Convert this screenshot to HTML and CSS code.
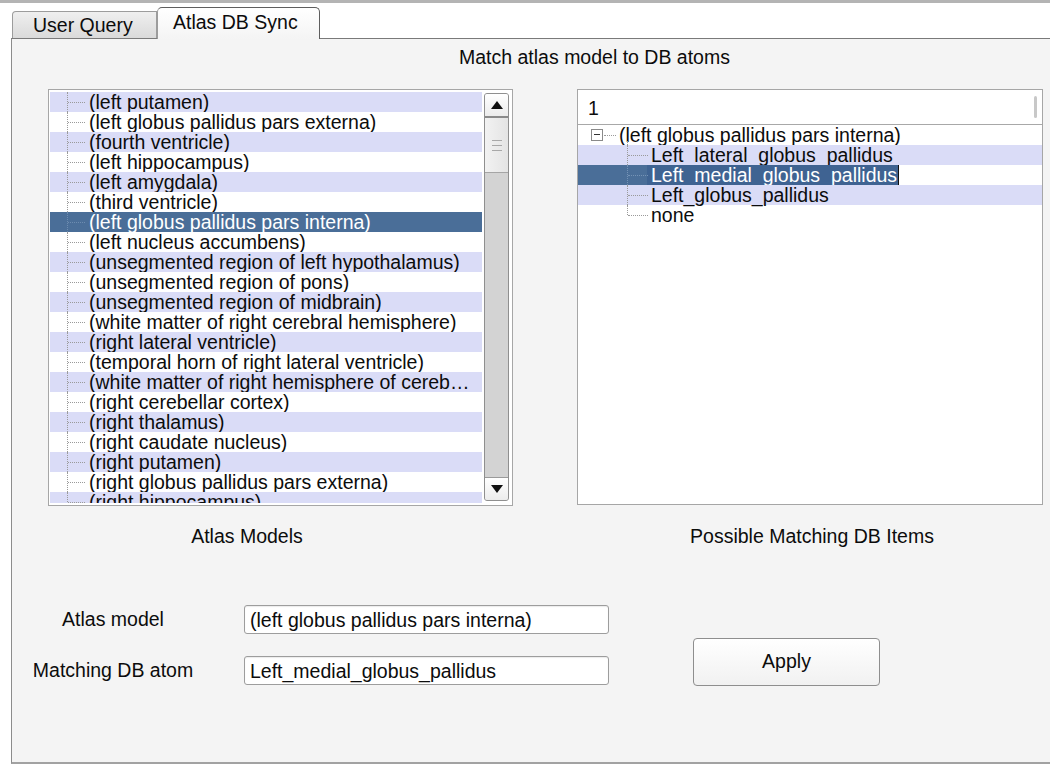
FILE: index.html
```html
<!DOCTYPE html>
<html>
<head>
<meta charset="utf-8">
<title>Atlas DB Sync</title>
<link rel="stylesheet" href="styles.css">
</head>
<body>
<div class="topbar"></div>
<div class="tabs">
  <div class="tab">User Query</div>
  <div class="tab active">Atlas DB Sync</div>
</div>
<div class="panel">
  <div class="title">Match atlas model to DB atoms</div>
  <div class="lists">
    <div class="listbox">
      <div class="rows">
        <div class="row">(left putamen)</div>
        <div class="row">(left globus pallidus pars externa)</div>
        <div class="row">(fourth ventricle)</div>
        <div class="row">(left hippocampus)</div>
        <div class="row">(left amygdala)</div>
        <div class="row">(third ventricle)</div>
        <div class="row sel">(left globus pallidus pars interna)</div>
        <div class="row">(left nucleus accumbens)</div>
        <div class="row">(unsegmented region of left hypothalamus)</div>
        <div class="row">(unsegmented region of pons)</div>
        <div class="row">(unsegmented region of midbrain)</div>
        <div class="row">(white matter of right cerebral hemisphere)</div>
        <div class="row">(right lateral ventricle)</div>
        <div class="row">(temporal horn of right lateral ventricle)</div>
        <div class="row">(white matter of right hemisphere of cerebellum)</div>
        <div class="row">(right cerebellar cortex)</div>
        <div class="row">(right thalamus)</div>
        <div class="row">(right caudate nucleus)</div>
        <div class="row">(right putamen)</div>
        <div class="row">(right globus pallidus pars externa)</div>
        <div class="row">(right hippocampus)</div>
      </div>
      <div class="vscroll">
        <div class="sbtn up"><svg width="12" height="8" viewBox="0 0 12 8"><polygon points="6,0 12,8 0,8" fill="#111"/></svg></div>
        <div class="thumb"><span></span><span></span><span></span></div>
        <div class="track"></div>
        <div class="sbtn down"><svg width="12" height="8" viewBox="0 0 12 8"><polygon points="0,0 12,0 6,8" fill="#111"/></svg></div>
      </div>
    </div>
    <div class="treebox">
      <div class="thead"><span>1</span><div class="hscroll"></div></div>
      <div class="trows">
        <div class="trow root"><span class="exp"></span><span class="twig"></span>(left globus pallidus pars interna)</div>
        <div class="trow child">Left_lateral_globus_pallidus</div>
        <div class="trow child tsel"><span class="edit">Left_medial_globus_pallidus</span></div>
        <div class="trow child">Left_globus_pallidus</div>
        <div class="trow child last">none</div>
      </div>
    </div>
  </div>
  <div class="captions">
    <div class="cap cap-left">Atlas Models</div>
    <div class="cap cap-right">Possible Matching DB Items</div>
  </div>
  <div class="form">
    <div class="fields">
      <div class="flabel">Atlas model</div>
      <div class="finput">(left globus pallidus pars interna)</div>
      <div class="flabel">Matching DB atom</div>
      <div class="finput">Left_medial_globus_pallidus</div>
    </div>
    <div class="apply">Apply</div>
  </div>
</div>
</body>
</html>
```

FILE: styles.css
```css
* { box-sizing: border-box; }
html, body {
  margin: 0;
  padding: 0;
  background: #ffffff;
  overflow: hidden;
  font-family: "Liberation Sans", Arial, sans-serif;
  font-size: 19.5px;
  color: #0c0c0c;
}
.topbar {
  height: 3px;
  background: #b4b4b4;
}
.tabs {
  height: 35px;
  display: flex;
  align-items: flex-end;
  padding-left: 12px;
}
.tab {
  width: 145px;
  height: 27px;
  line-height: 26px;
  padding-left: 20px;
  border: 1px solid #9c9c9c;
  border-bottom: none;
  border-top-left-radius: 4px;
  background: linear-gradient(#efefef, #dadada);
  white-space: nowrap;
}
.tab.active {
  width: 163px;
  height: 32px;
  line-height: 28px;
  padding-left: 15px;
  margin-bottom: -1px;
  position: relative;
  z-index: 1;
  border: 1px solid #5e5e5e;
  border-bottom: none;
  border-left-color: #9c9c9c;
  border-radius: 5px 5px 0 0;
  background: linear-gradient(#ffffff, #f4f4f4);
}
.panel {
  margin-left: 11px;
  width: 1060px;
  height: 726px;
  border-top: 1px solid #7a7a7a;
  border-left: 1px solid #8c8c8c;
  border-bottom: 2px solid #a2a2a2;
  background: #f4f4f4;
}
.title {
  height: 50px;
  padding-top: 7px;
  line-height: 22px;
  padding-left: 447px;
}
.lists {
  display: flex;
  padding-left: 36px;
  height: 417px;
}
.listbox {
  width: 465px;
  height: 417px;
  border: 1px solid #a6a6a6;
  background: #ffffff;
  display: flex;
  padding: 2px 3px 2px 1px;
}
.rows {
  width: 433px;
  overflow: hidden;
}
.row {
  position: relative;
  height: 20px;
  line-height: 20px;
  padding-left: 39px;
  padding-right: 8px;
  white-space: nowrap;
  overflow: hidden;
  text-overflow: ellipsis;
}
.row:nth-child(odd) { background: #dadcf7; }
.row::before {
  content: "";
  position: absolute;
  left: 17px;
  top: 0;
  bottom: 0;
  border-left: 1px dotted #9a9a9a;
}
.row::after {
  content: "";
  position: absolute;
  left: 18px;
  width: 17px;
  top: 10px;
  border-top: 1px dotted #9a9a9a;
}
.row.sel {
  background: #4a6e98;
  color: #ffffff;
}
.row.sel::before, .row.sel::after { border-color: #6d8cb0; }
.vscroll {
  width: 25px;
  margin-left: 2px;
  margin-top: 1px;
  margin-bottom: 2px;
  border: 1px solid #8f8f8f;
  border-radius: 3px;
  display: flex;
  flex-direction: column;
  background: #d3d3d3;
  overflow: hidden;
}
.sbtn {
  height: 24px;
  background: linear-gradient(#ffffff, #ececec);
  display: flex;
  align-items: center;
  justify-content: center;
}
.sbtn.up { border-bottom: 2px solid #8a8a8a; }
.sbtn.down { border-top: 1px solid #9a9a9a; height: 23px; }
.thumb {
  height: 55px;
  background: linear-gradient(90deg, #f2f2f2, #e4e4e4);
  border-bottom: 1px solid #a5a5a5;
  display: flex;
  flex-direction: column;
  align-items: center;
  justify-content: center;
  gap: 4px;
}
.thumb span {
  width: 10px;
  height: 1px;
  background: #a8a8a8;
}
.track { flex: 1; }
.treebox {
  margin-left: 64px;
  width: 466px;
  height: 416px;
  border: 1px solid #a6a6a6;
  background: #ffffff;
}
.thead {
  height: 35px;
  border-bottom: 1px solid #a8a8a8;
  padding-left: 10px;
  line-height: 36px;
  display: flex;
  justify-content: space-between;
  background: #ffffff;
}
.hscroll {
  width: 3px;
  height: 22px;
  margin-top: 6px;
  margin-right: 5px;
  background: #c8c8c8;
  border-radius: 2px;
}
.trows { padding-top: 0; }
.trow {
  position: relative;
  height: 20px;
  line-height: 20px;
  white-space: nowrap;
}
.trow.root {
  padding-left: 41px;
}
.exp {
  position: absolute;
  left: 13px;
  top: 4px;
  width: 12px;
  height: 12px;
  border: 1px solid #8a8a8a;
  background: #ffffff;
}
.exp::after {
  content: "";
  position: absolute;
  left: 2px;
  right: 2px;
  top: 4px;
  border-top: 1px solid #333;
}
.twig {
  position: absolute;
  left: 26px;
  width: 12px;
  top: 10px;
  border-top: 1px dotted #9a9a9a;
}
.trow.root::after {
  content: "";
  position: absolute;
  left: 49px;
  top: 16px;
  bottom: 0;
  border-left: 1px dotted #9a9a9a;
}
.trow.child {
  padding-left: 73px;
}
.trow.child:nth-child(even) { background: #dadcf7; }
.trow.child::before {
  content: "";
  position: absolute;
  left: 49px;
  top: 0;
  bottom: 0;
  border-left: 1px dotted #9a9a9a;
}
.trow.child.last::before { bottom: 10px; }
.trow.child::after {
  content: "";
  position: absolute;
  left: 50px;
  width: 20px;
  top: 10px;
  border-top: 1px dotted #9a9a9a;
}
.trow.tsel {
  background: linear-gradient(90deg, #4a6e98 0, #4a6e98 69px, #ffffff 69px);
  padding-left: 69px;
}
.trow.tsel::before, .trow.tsel::after { border-color: #7593b6; }
.edit {
  display: inline-block;
  height: 20px;
  padding-left: 4px;
  padding-right: 1px;
  background: #3f6392;
  color: #ffffff;
  border-right: 1px solid #111;
}
.captions {
  display: flex;
  margin-top: 19px;
  line-height: 22px;
  height: 22px;
}
.cap { text-align: center; }
.cap-left { width: 446px; padding-left: 0; margin-left: 12px; }
.cap-right { width: 446px; margin-left: 119px; }
.form {
  display: flex;
  margin-top: 58px;
  padding-left: 8px;
}
.fields {
  display: grid;
  grid-template-columns: 186px 365px;
  column-gap: 38px;
  row-gap: 21px;
}
.flabel {
  text-align: center;
  line-height: 29px;
  height: 29px;
  margin-top: 0;
}
.finput {
  height: 29px;
  line-height: 29px;
  border: 1px solid #9d9d9d;
  border-radius: 3px;
  background: #ffffff;
  padding-left: 5px;
  box-shadow: inset 0 1px 1px rgba(0,0,0,0.08);
  white-space: nowrap;
}
.apply {
  width: 187px;
  height: 48px;
  margin-left: 84px;
  margin-top: 33px;
  border: 1px solid #8e8e8e;
  border-radius: 4px;
  background: linear-gradient(#ffffff, #f1f1f1);
  text-align: center;
  line-height: 45px;
}
```
